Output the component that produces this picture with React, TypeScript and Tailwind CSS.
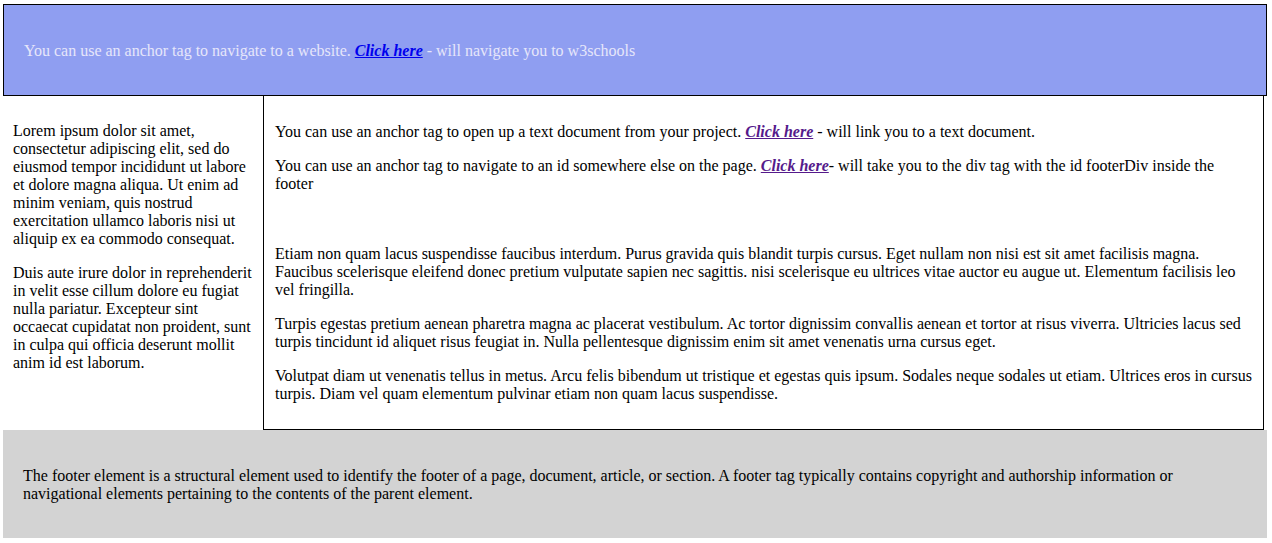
export default function App() {
  return (
    <div className="ml-[3px] mt-[4px] w-[1264px] text-[16px] leading-[18px] text-black font-['Liberation_Serif',serif]">
      {/* Header */}
      <header className="border border-black bg-[#8f9ef1] pl-[20px] pr-[21px] pt-[21px] pb-[19px] text-[#e6e6fa]">
        <p className="my-4">
          You can use an anchor tag to navigate to a website.{" "}
          <a href="#" className="font-bold italic text-[#0000ee] underline">
            Click here
          </a>{" "}
          - will navigate you to w3schools
        </p>
      </header>

      <div className="flex">
        {/* Aside */}
        <aside className="w-[260px] px-[10px] pt-[10px] pb-[9px]">
          <p className="my-4">
            Lorem ipsum dolor sit amet, consectetur adipiscing elit, sed do eiusmod tempor incididunt ut labore et
            dolore magna aliqua. Ut enim ad minim veniam, quis nostrud exercitation ullamco laboris nisi ut aliquip
            ex ea commodo consequat.
          </p>
          <p className="my-4">
            Duis aute irure dolor in reprehenderit in velit esse cillum dolore eu fugiat nulla pariatur. Excepteur
            sint occaecat cupidatat non proident, sunt in culpa qui officia deserunt mollit anim id est laborum.
          </p>
        </aside>

        {/* Main */}
        <main className="w-[1001px] border border-t-0 border-black px-[11px] pt-[11px] pb-[10px]">
          <p className="my-4">
            You can use an anchor tag to open up a text document from your project.{" "}
            <a href="#" className="font-bold italic text-[#551a8b] underline">
              Click here
            </a>{" "}
            - will link you to a text document.
          </p>
          <p className="my-4">
            You can use an anchor tag to navigate to an id somewhere else on the page.{" "}
            <a href="#" className="font-bold italic text-[#551a8b] underline">
              Click here
            </a>
            - will take you to the div tag with the id footerDiv inside the footer
          </p>
          <p className="mt-[52px] mb-4">
            Etiam non quam lacus suspendisse faucibus interdum. Purus gravida quis blandit turpis cursus. Eget nullam
            non nisi est sit amet facilisis magna. Faucibus scelerisque eleifend donec pretium vulputate sapien nec
            sagittis. nisi scelerisque eu ultrices vitae auctor eu augue ut. Elementum facilisis leo vel fringilla.
          </p>
          <p className="my-4">
            Turpis egestas pretium aenean pharetra magna ac placerat vestibulum. Ac tortor dignissim convallis aenean
            et tortor at risus viverra. Ultricies lacus sed turpis tincidunt id aliquet risus feugiat in. Nulla
            pellentesque dignissim enim sit amet venenatis urna cursus eget.
          </p>
          <p className="my-4">
            Volutpat diam ut venenatis tellus in metus. Arcu felis bibendum ut tristique et egestas quis ipsum.
            Sodales neque sodales ut etiam. Ultrices eros in cursus turpis. Diam vel quam elementum pulvinar etiam
            non quam lacus suspendisse.
          </p>
        </main>
      </div>

      {/* Footer */}
      <footer id="footerDiv" className="bg-[#d3d3d3] pl-[20px] pr-[21px] pt-[21px] pb-[19px]">
        <p className="my-4">
          The footer element is a structural element used to identify the footer of a page, document, article, or
          section. A footer tag typically contains copyright and authorship information or navigational elements
          pertaining to the contents of the parent element.
        </p>
      </footer>
    </div>
  );
}
